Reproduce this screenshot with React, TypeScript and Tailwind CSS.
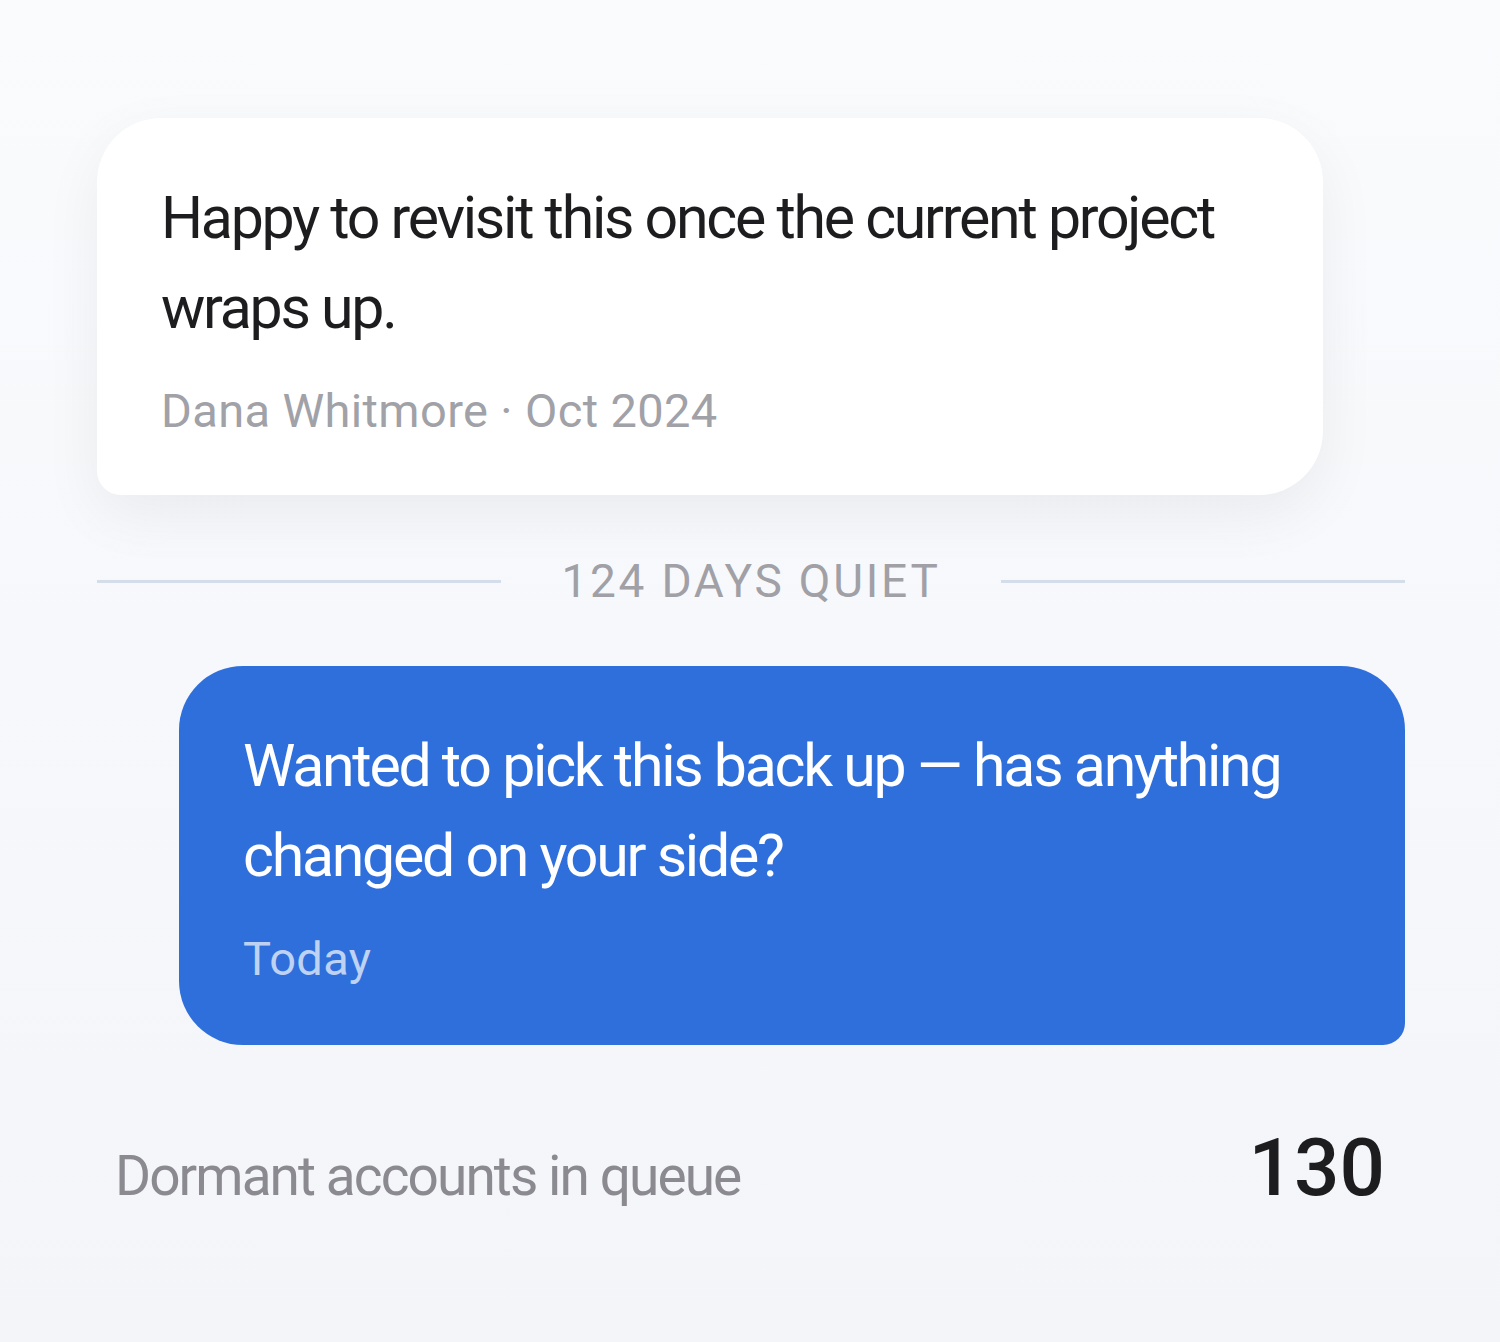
import React from 'react';

const Bubble = ({
  text,
  meta,
  mine,
}: {
  text: string;
  meta: string;
  mine?: boolean;
}) => (
  <div
    className={
      mine
        ? 'ml-[82px] w-[1226px] rounded-[64px] rounded-br-[22px] bg-[#2f6fdc] px-[64px] pt-[55px] pb-[54px]'
        : 'w-[1226px] rounded-[64px] rounded-bl-[24px] bg-white px-[64px] pt-[55px] pb-[52px] shadow-[0_20px_60px_rgba(15,23,42,0.06)]'
    }
  >
    <p
      className={
        'text-[59px] leading-[90px] tracking-[-0.038em] ' +
        (mine ? 'text-white' : 'text-[#1d1d1f]')
      }
    >
      {text}
    </p>
    <p
      className={
        'mt-[26px] text-[47px] leading-[64px] tracking-[0.008em] ' +
        (mine ? 'text-white/70' : 'text-[#a1a1a8]')
      }
    >
      {meta}
    </p>
  </div>
);

export default function App() {
  return (
    <div
      className="min-h-[1342px] bg-gradient-to-b from-[#fafbfd] to-[#f4f5f9] pt-[118px]"
      style={{ fontFamily: 'Roboto, "Noto Sans", sans-serif' }}
    >
      <div className="ml-[97px] w-[1308px]">
        <Bubble
          text="Happy to revisit this once the current project wraps up."
          meta="Dana Whitmore · Oct 2024"
        />

        <div className="mt-[63px] flex items-center gap-[60px]">
          <div className="h-[3px] flex-1 bg-[#d5dcea]" />
          <span className="text-[46px] leading-none tracking-[0.06em] text-[#a0a0a6]">
            124 DAYS QUIET
          </span>
          <div className="h-[3px] flex-1 bg-[#d5dcea]" />
        </div>

        <div className="mt-[62px]">
          <Bubble
            mine
            text="Wanted to pick this back up — has anything changed on your side?"
            meta="Today"
          />
        </div>

        <div className="mt-[83px] flex items-baseline justify-between pl-[18px] pr-[20px]">
          <span className="text-[55px] leading-none tracking-[-0.035em] text-[#8a8a90]">
            Dormant accounts in queue
          </span>
          <span className="text-[80px] leading-none font-medium text-[#1d1d1f]">130</span>
        </div>
      </div>
    </div>
  );
}
